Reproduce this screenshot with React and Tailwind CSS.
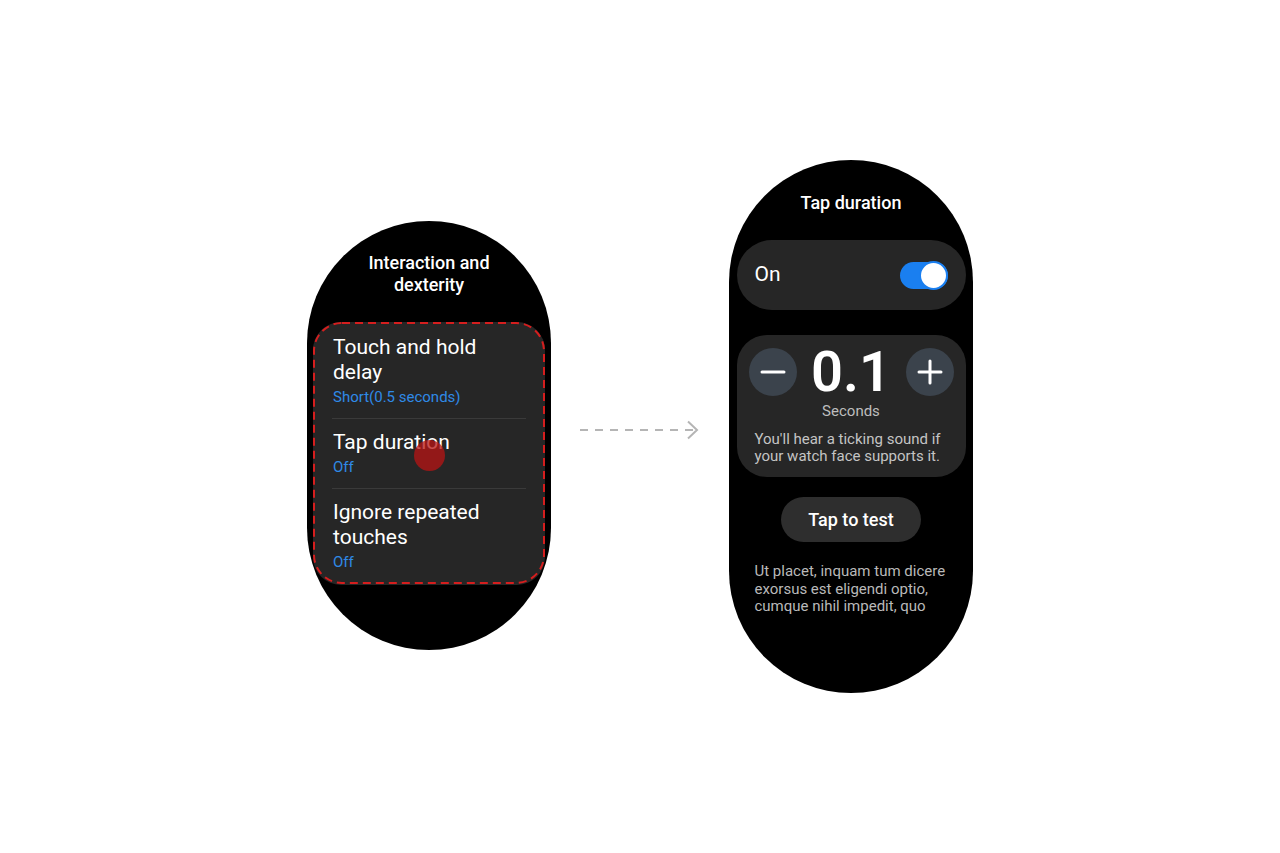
import React from 'react';

const font = { fontFamily: 'Roboto, "Noto Sans", sans-serif' };

const MenuItem = ({ title, value, last }) => (
  <div>
    <div className="px-[18px] pt-[11px] pb-[12px]">
      <div className="text-[21px] leading-[25px] text-white">{title}</div>
      <div className="mt-[3px] text-[15px] leading-[18px] text-[#2f8ae6]">{value}</div>
    </div>
    {!last && <div className="mx-[17px] h-px bg-[#3a3a3a]" />}
  </div>
);

const LeftWatch = () => (
  <div className="relative mt-[18px] flex h-[429px] w-[244px] flex-col items-center rounded-full bg-black">
    <div className="pt-[31px] text-center text-[18px] font-medium leading-[22px] text-white">
      Interaction and
      <br />
      dexterity
    </div>
    <div className="relative mt-[26px] w-[232px] rounded-[28px] bg-[#262626] p-[2px]">
      <svg className="pointer-events-none absolute inset-0" width="232" height="262" viewBox="0 0 232 262">
        <rect x="1" y="1" width="230" height="260" rx="28" fill="none" stroke="#d51e1e" strokeWidth="2" strokeDasharray="8 5" />
      </svg>
      <MenuItem title={<>Touch and hold<br />delay</>} value="Short(0.5 seconds)" />
      <MenuItem title="Tap duration" value="Off" />
      <MenuItem title={<>Ignore repeated<br />touches</>} value="Off" last />
    </div>
    {/* tap indicator */}
    <div className="absolute left-[107px] top-[219px] h-[31px] w-[31px] rounded-full bg-[#b81414]/75" />
  </div>
);

const Arrow = () => (
  <svg width="120" height="24" viewBox="0 0 120 24" className="mx-[29px] mt-[6px]">
    <line x1="0" y1="12" x2="114" y2="12" stroke="#b5b5b5" strokeWidth="2" strokeDasharray="8 7" />
    <path d="M108 3.5 L117 12 L108 20.5" fill="none" stroke="#b5b5b5" strokeWidth="2" />
  </svg>
);

const RightWatch = () => (
  <div className="flex h-[533px] w-[244px] flex-col items-center rounded-full bg-black">
    <div className="pt-[32px] text-[18px] font-medium leading-[22px] text-white">Tap duration</div>

    <div className="mt-[26px] flex h-[70px] w-[229px] items-center justify-between rounded-full bg-[#262626] pl-[18px] pr-[18px]">
      <span className="text-[21px] text-white">On</span>
      <div className="relative h-[27px] w-[48px] rounded-full bg-[#1a7ff0]">
        <div className="absolute right-0 top-[-1px] h-[29px] w-[29px] rounded-full border-2 border-[#1a7ff0] bg-white" />
      </div>
    </div>

    <div className="mt-[25px] w-[229px] rounded-[30px] bg-[#262626] pb-[12px] pt-[9px]">
      <div className="flex items-center justify-between px-[12px]">
        <div className="flex h-[48px] w-[48px] items-center justify-center rounded-full bg-[#3b434c]">
          <svg width="26" height="26" viewBox="0 0 26 26">
            <line x1="2" y1="13" x2="24" y2="13" stroke="white" strokeWidth="3" strokeLinecap="round" />
          </svg>
        </div>
        <span className="text-[56px] font-semibold leading-[56px] text-white">0.1</span>
        <div className="flex h-[48px] w-[48px] items-center justify-center rounded-full bg-[#3b434c]">
          <svg width="26" height="26" viewBox="0 0 26 26">
            <line x1="2" y1="13" x2="24" y2="13" stroke="white" strokeWidth="3" strokeLinecap="round" />
            <line x1="13" y1="2" x2="13" y2="24" stroke="white" strokeWidth="3" strokeLinecap="round" />
          </svg>
        </div>
      </div>
      <div className="mt-[2px] text-center text-[15px] leading-[18px] text-[#bdbdbd]">Seconds</div>
      <div className="mt-[11px] px-[18px] text-[15px] leading-[17px] text-[#c4c4c4]">
        You'll hear a ticking sound if your watch face supports it.
      </div>
    </div>

    <div className="mt-[20px] flex h-[45px] w-[140px] items-center justify-center rounded-full bg-[#2e2e2e] text-[18px] font-medium text-white">
      Tap to test
    </div>

    <div className="mt-[21px] w-[229px] px-[18px] text-[15px] leading-[17.5px] text-[#b9b9b9]">
      Ut placet, inquam tum dicere exorsus est eligendi optio, cumque nihil impedit, quo
    </div>
  </div>
);

export default function App() {
  return (
    <div className="flex h-[853px] w-[1280px] items-center justify-center bg-white" style={font}>
      <LeftWatch />
      <Arrow />
      <RightWatch />
    </div>
  );
}
